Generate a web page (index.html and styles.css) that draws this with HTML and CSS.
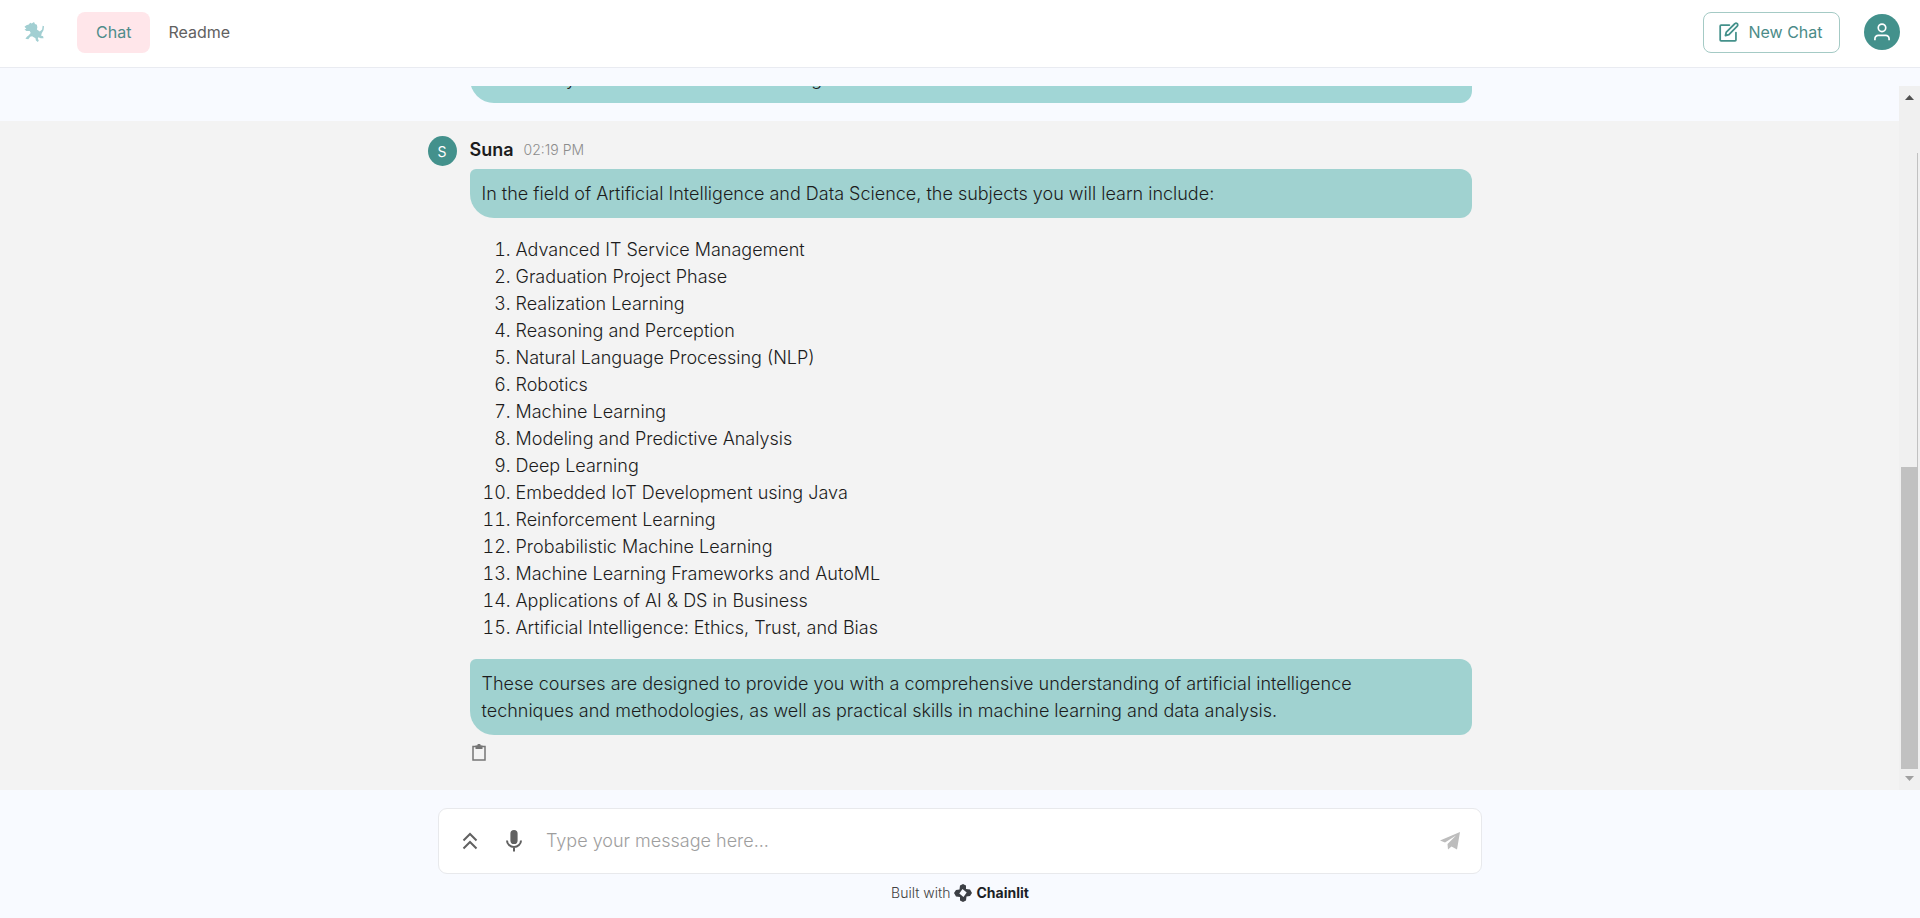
FILE: index.html
```html
<!DOCTYPE html>
<html lang="en">
<head>
<meta charset="utf-8">
<title>Suna</title>
<link rel="stylesheet" href="styles.css">
</head>
<body>
<header class="topbar">
  <svg class="logo" viewBox="0 0 22 22" aria-label="Suna"><path d="M2.500 4L5 3.200L6.500 1.200L8 2L10.500.5L11.500 2.500L13.500 3.500L14 6L13.500 8.500L16.500 10.500L19 8.500L19.500 4.500L21 5L20.500 9L18.500 12.500L18 15L20 15.500L20.500 17.500L17.500 17.500L15 16.500L14.500 18L15.500 20L14.500 21.500L12.500 20L12 17.500L8.500 15.500L6.500 16L4.500 18.500L1.500 18L3 16L5 14.500L7 12L6 10L2.500 10L.5 8.500L2.500 7.500L.5 5.500Z"/></svg>
  <nav class="tabs">
    <button class="tab tab-active">Chat</button>
    <button class="tab">Readme</button>
  </nav>
  <button class="new-chat">
    <svg class="icon-edit" viewBox="0 0 24 24"><path d="M13 3.500H3.500a1 1 0 0 0-1 1v16a1 1 0 0 0 1 1h16a1 1 0 0 0 1-1V12"/><path d="M8.500 15.500l1-4L19.200 2a1.800 1.800 0 0 1 2.800 2.700L12.500 14.500z"/></svg>
    New Chat
  </button>
  <button class="user" aria-label="Account"><svg viewBox="0 0 24 24"><circle cx="12" cy="7" r="4.500"/><path d="M3.500 22v-2a4 4 0 0 1 4-4h9a4 4 0 0 1 4 4v2"/></svg></button>
</header>
<main class="chat">
  <div class="thread">
    <section class="message message-previous">
      <div class="column"><div class="body"><p class="bubble">Can I study AI and data science as a beginner?</p></div></div>
    </section>
    <section class="message message-answer">
      <div class="column">
        <span class="avatar">S</span>
        <div class="body">
          <div class="meta"><strong class="author">Suna</strong><time class="time">02:19 PM</time></div>
          <p class="bubble">In the field of Artificial Intelligence and Data Science, the subjects you will learn include:</p>
          <ol class="subjects">
            <li>Advanced IT Service Management</li>
            <li>Graduation Project Phase</li>
            <li>Realization Learning</li>
            <li>Reasoning and Perception</li>
            <li>Natural Language Processing (NLP)</li>
            <li>Robotics</li>
            <li>Machine Learning</li>
            <li>Modeling and Predictive Analysis</li>
            <li>Deep Learning</li>
            <li>Embedded IoT Development using Java</li>
            <li>Reinforcement Learning</li>
            <li>Probabilistic Machine Learning</li>
            <li>Machine Learning Frameworks and AutoML</li>
            <li>Applications of AI &amp; DS in Business</li>
            <li>Artificial Intelligence: Ethics, Trust, and Bias</li>
          </ol>
          <p class="bubble">These courses are designed to provide you with a comprehensive understanding of artificial intelligence techniques and methodologies, as well as practical skills in machine learning and data analysis.</p>
          <button class="copy" aria-label="Copy"><svg viewBox="0 0 14 17"><path d="M1 2.500h12v13.500H1z"/><path class="clip" d="M3.500 1.500h1.800a1.700 1.700 0 0 1 3.400 0h1.800v3.500h-7z"/></svg></button>
        </div>
      </div>
    </section>
  </div>
  <div class="scrollbar" aria-hidden="true">
    <svg class="arrow arrow-up" viewBox="0 0 9 5"><path d="M0 5L4.500 0L9 5z"/></svg>
    <div class="track"><div class="thumb"></div></div>
    <svg class="arrow arrow-down" viewBox="0 0 9 5"><path d="M0 0L4.500 5L9 0z"/></svg>
  </div>
</main>
<footer class="footer">
  <form class="composer">
    <button type="button" class="tool" aria-label="History"><svg viewBox="0 0 24 24"><path class="line" d="M5.500 11.500L12 5L18.500 11.500M5.500 19.500L12 13L18.500 19.500"/></svg></button>
    <button type="button" class="tool" aria-label="Speak"><svg viewBox="0 0 24 24"><path d="M12 15a3.600 3.600 0 0 0 3.600-3.600V4.600a3.600 3.600 0 0 0-7.200 0v6.800a3.600 3.600 0 0 0 3.600 3.600z"/><path class="line" d="M5 11.500a7 6.500 0 0 0 14 0M12 18v4.500"/></svg></button>
    <input class="prompt" type="text" aria-label="Message" placeholder="Type your message here...">
    <button type="button" class="send" aria-label="Send"><svg viewBox="0 0 20 18"><path d="M20 0L17 17.500L11.500 14.500L8 17.500L7.500 12L16 3.500L5 10.500L0 8.500z"/></svg></button>
  </form>
  <a class="credit" href="#">Built with
    <svg class="mark" viewBox="0 0 18 18"><path fill-rule="evenodd" d="M9 0L12 1.500L12 5L16 5.500L18 9L16 12L12.500 12.500L12 16.500L9 18L6 16.500L6 13L2 12.500L0 9L2 6L5.500 5.500L6 1.500zM8.500 5L5.300 9.500L9.500 13L12.700 8.500z"/></svg>
    <span class="brand">Chainlit</span></a>
</footer>
</body>
</html>
```
FILE: styles.css
```css
* { box-sizing: border-box; }
body {
  margin: 0;
  height: 100vh;
  display: flex;
  flex-direction: column;
  background: #f8faff;
  color: #1c1c1c;
  font-family: Inter, "Liberation Sans", sans-serif;
}
button { border: 0; padding: 0; background: none; font: inherit; color: inherit; display: flex; align-items: center; justify-content: center; }
svg { display: block; flex: none; }

.topbar { display: flex; align-items: center; height: 68px; padding: 0 20px 3px 24px; background: #fff; border-bottom: 1px solid #e9ebf1; flex: none; }
.logo { width: 21px; height: 22px; fill: #a2cfd2; }
.tabs { display: flex; margin-left: 32px; flex: 1; }
.tab { height: 41px; padding: 0 18px; border-radius: 8px; font-size: 16px; color: #616161; }
.tab-active { padding: 0 19px; background: #ffe6ea; color: #4f8c8a; }
.new-chat { height: 41px; width: 137px; gap: 9px; padding-right: 2px; border: 1px solid #a4cac5; border-radius: 8px; font-size: 16px; color: #4b8b88; }
.icon-edit { width: 21px; height: 21px; fill: none; stroke: #44918b; stroke-width: 2; stroke-linejoin: round; stroke-linecap: round; }
.user { width: 36px; height: 36px; margin-left: 24px; border-radius: 50%; background: #43918c; }
.user svg { width: 20px; height: 20px; fill: none; stroke: #fff; stroke-width: 2; }

.chat { flex: 1; min-height: 0; display: flex; margin-top: 18px; }
.thread { flex: 1; min-width: 0; display: flex; flex-direction: column; justify-content: flex-end; overflow: hidden; }
.message { padding: 13px 0 18px; flex: none; }
.message-answer { background: #f3f3f3; padding-bottom: 25px; }
.column { display: flex; gap: 13px; max-width: 1044px; margin: 0 auto; }
.avatar { width: 29px; height: 30px; margin-top: 2px; border-radius: 50%; background: #43918c; color: #fff; font-size: 14px; display: flex; align-items: center; justify-content: center; flex: none; }
.body { flex: 1; display: flex; flex-direction: column; }
.message-previous .body { margin-left: 42px; }
.meta { display: flex; align-items: center; gap: 10px; height: 35px; padding-bottom: 4px; }
.author { font-size: 18px; font-weight: 600; }
.time { font-size: 14px; font-weight: 300; color: #8c8c8c; }
.bubble { margin: 0; padding: 11px 36px 11px 12px; border-radius: 6px 12px 12px 24px; background: #a0d2d0; font-size: 18px; font-weight: 300; line-height: 27px; }
.message-previous .bubble { background: #a1d6d6; }
.subjects { margin: 18px 0; padding-left: 46px; font-size: 18px; font-weight: 300; line-height: 27px; }
.copy { width: 14px; height: 17px; margin: 9px 0 4px 2px; }
.copy svg { width: 14px; height: 17px; fill: none; stroke: #757575; stroke-width: 1.500; }
.copy .clip { fill: #757575; stroke: none; }

.scrollbar { width: 21px; background: #f0f0f0; display: flex; flex-direction: column; align-items: center; padding: 9px 0; flex: none; }
.arrow { width: 9px; height: 5px; fill: #505050; }
.arrow-down { fill: #a0a0a0; }
.track { flex: 1; width: 17px; margin: 53px 0 7px; border-right: 1px solid #c1c1c1; display: flex; align-items: flex-end; }
.thumb { width: 100%; height: 49%; background: #c1c1c1; }

.footer { flex: none; display: flex; flex-direction: column; align-items: center; padding: 18px 20px 15px; }
.composer { display: flex; align-items: center; width: 100%; max-width: 1044px; height: 66px; padding: 0 21px 1px 19px; border: 1px solid #e8e9ec; border-radius: 9px; background: #fff; }
.tool { width: 24px; height: 24px; margin-right: 20px; }
.tool svg { width: 24px; height: 24px; fill: #616161; }
.tool .line { fill: none; stroke: #616161; stroke-width: 2; }
.prompt { flex: 1; min-width: 0; border: 0; outline: 0; padding: 0; background: none; font-family: inherit; font-size: 18px; font-weight: 300; line-height: 27px; color: #212121; }
.prompt::placeholder { color: #9e9e9e; opacity: 1; }
.send svg { width: 20px; height: 18px; fill: #bdbdbd; }
.credit { display: flex; align-items: center; gap: 4px; margin-top: 9px; font-size: 14px; line-height: 20px; font-weight: 300; color: #424242; text-decoration: none; }
.mark { width: 18px; height: 18px; fill: #3c3f45; }
.brand { font-weight: 700; color: #1c1f26; }
```
